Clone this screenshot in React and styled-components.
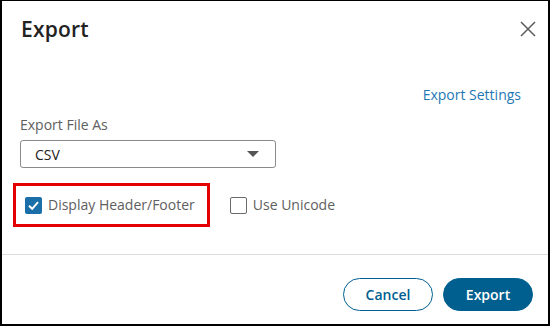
import React, { useState } from "react";
import styled, { createGlobalStyle } from "styled-components";

const colors = {
  frame: "#000000",
  text: "#222222",
  muted: "#5e5e5e",
  link: "#1f78b4",
  primary: "#005f8f",
  divider: "#dcdcdc",
  highlight: "#e50000",
};

const GlobalStyle = createGlobalStyle`
  html, body {
    margin: 0;
    padding: 0;
    background: #ffffff;
  }
  body {
    font-family: "Open Sans", "Noto Sans", "Liberation Sans", sans-serif;
  }
`;

const Dialog = styled.div`
  box-sizing: border-box;
  width: 550px;
  height: 326px;
  display: flex;
  flex-direction: column;
  background: #ffffff;
  border: 2px solid ${colors.frame};
  border-top-width: 1px;
`;

const Header = styled.div`
  display: flex;
  align-items: center;
  justify-content: space-between;
  padding: 16px 9px 0 19px;
`;

const Title = styled.h2`
  margin: 0;
  font-size: 21px;
  line-height: 24px;
  font-weight: 600;
  letter-spacing: 0.2px;
  color: ${colors.text};
`;

const CloseButton = styled.button`
  width: 22px;
  height: 22px;
  padding: 0;
  border: none;
  background: none;
  cursor: pointer;
  display: flex;
  align-items: center;
  justify-content: center;
`;

const Body = styled.div`
  flex: 1;
  display: flex;
  flex-direction: column;
  padding: 44px 27px 0 18px;
`;

const LinkRow = styled.div`
  display: flex;
  justify-content: flex-end;
`;

const Link = styled.a`
  font-size: 14px;
  line-height: 20px;
  color: ${colors.link};
  text-decoration: none;
  cursor: pointer;
`;

const Label = styled.label`
  margin-top: 10px;
  font-size: 14px;
  line-height: 20px;
  color: ${colors.muted};
`;

const Select = styled.div`
  box-sizing: border-box;
  margin-top: 5px;
  width: 256px;
  height: 28px;
  display: flex;
  align-items: center;
  justify-content: space-between;
  padding: 0 16px 0 14px;
  border: 1px solid #8a8a8a;
  border-radius: 3px;
  font-size: 14px;
  color: ${colors.text};
`;

const Caret = styled.span`
  width: 0;
  height: 0;
  border-left: 6px solid transparent;
  border-right: 6px solid transparent;
  border-top: 6px solid #555555;
`;

const OptionsRow = styled.div`
  margin-top: 15px;
  margin-left: -7px;
  display: flex;
  align-items: center;
  gap: 20px;
`;

const Highlight = styled.div`
  display: flex;
  align-items: center;
  height: 38px;
  padding: 0 12px 0 9px;
  border: 3px solid ${colors.highlight};
`;

const CheckRow = styled.label`
  display: flex;
  align-items: center;
  gap: 6px;
  font-size: 14px;
  line-height: 20px;
  color: ${colors.muted};
  cursor: pointer;
`;

const Box = styled.span`
  box-sizing: border-box;
  width: 17px;
  height: 17px;
  border-radius: 2px;
  display: flex;
  align-items: center;
  justify-content: center;
  background: ${(p) => (p.checked ? "#1a6fa8" : "#ffffff")};
  border: ${(p) => (p.checked ? "none" : "1.5px solid #6b6b6b")};
`;

const Footer = styled.div`
  display: flex;
  justify-content: flex-end;
  gap: 10px;
  padding: 23px 15px 13px;
  border-top: 1px solid ${colors.divider};
`;

const Button = styled.button`
  box-sizing: border-box;
  width: 90px;
  height: 33px;
  border-radius: 17px;
  font-family: inherit;
  font-size: 14px;
  font-weight: 600;
  cursor: pointer;
  border: 1px solid ${colors.primary};
  background: ${(p) => (p.primary ? colors.primary : "#ffffff")};
  color: ${(p) => (p.primary ? "#ffffff" : colors.primary)};
`;

function Checkbox({ checked, onChange, children }) {
  return (
    <CheckRow onClick={onChange}>
      <Box checked={checked}>
        {checked && (
          <svg width="13" height="13" viewBox="0 0 13 13">
            <path d="M2 6.8 L5.2 9.8 L11 3.2" fill="none" stroke="#fff" strokeWidth="2" />
          </svg>
        )}
      </Box>
      {children}
    </CheckRow>
  );
}

export default function App() {
  const [header, setHeader] = useState(true);
  const [unicode, setUnicode] = useState(false);

  return (
    <>
      <GlobalStyle />
      <Dialog>
        <Header>
          <Title>Export</Title>
          <CloseButton aria-label="Close">
            <svg width="16" height="16" viewBox="0 0 16 16">
              <path d="M1 1 L15 15 M15 1 L1 15" stroke="#5c5c5c" strokeWidth="1.5" />
            </svg>
          </CloseButton>
        </Header>
        <Body>
          <LinkRow>
            <Link>Export Settings</Link>
          </LinkRow>
          <Label>Export File As</Label>
          <Select>
            CSV
            <Caret />
          </Select>
          <OptionsRow>
            <Highlight>
              <Checkbox checked={header} onChange={() => setHeader(!header)}>
                Display Header/Footer
              </Checkbox>
            </Highlight>
            <Checkbox checked={unicode} onChange={() => setUnicode(!unicode)}>
              Use Unicode
            </Checkbox>
          </OptionsRow>
        </Body>
        <Footer>
          <Button>Cancel</Button>
          <Button primary>Export</Button>
        </Footer>
      </Dialog>
    </>
  );
}
